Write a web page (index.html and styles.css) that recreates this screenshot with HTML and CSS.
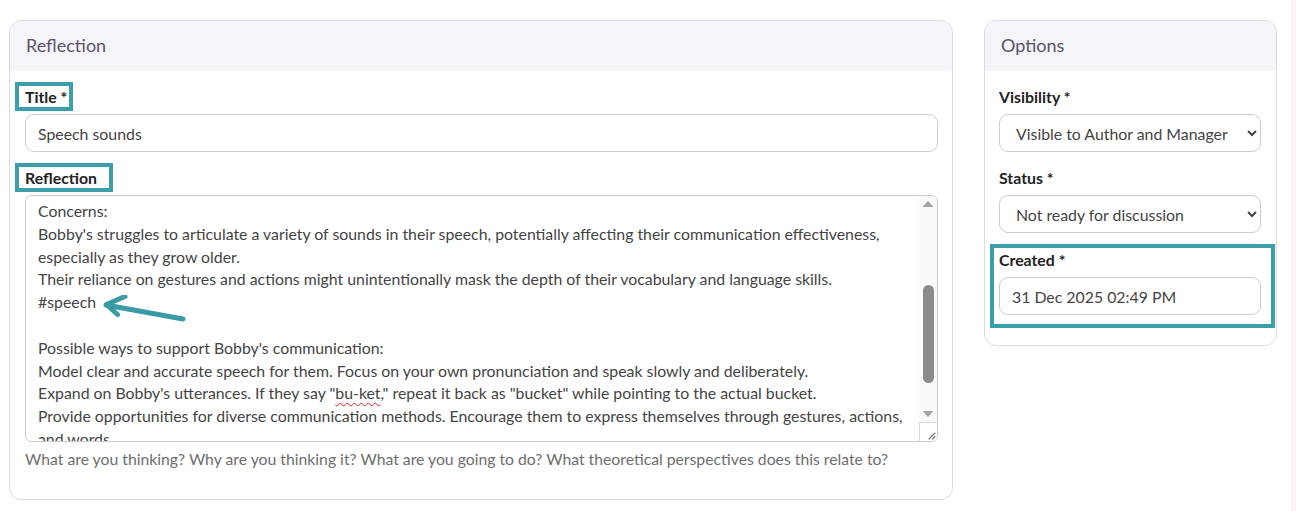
FILE: index.html
```html
<!DOCTYPE html>
<html lang="en">
<head>
<meta charset="utf-8">
<title>Reflection</title>
<link rel="stylesheet" href="styles.css">
</head>
<body>
<div class="page">
  <main class="layout">
    <section class="card card-main">
      <header class="card-header">Reflection</header>
      <div class="card-body">
        <div class="field">
          <label class="label"><span class="mark mark-title">Title <span class="req">*</span></span></label>
          <div class="input">Speech sounds</div>
        </div>
        <div class="field">
          <label class="label"><span class="mark mark-refl">Reflection</span></label>
          <div class="textarea">
            <div class="ta-content">
              <div>Concerns:</div>
              <div>Bobby's struggles to articulate a variety of sounds in their speech, potentially affecting their communication effectiveness,</div>
              <div>especially as they grow older.</div>
              <div>Their reliance on gestures and actions might unintentionally mask the depth of their vocabulary and language skills.</div>
              <div>#speech</div>
              <div>&nbsp;</div>
              <div>Possible ways to support Bobby's communication:</div>
              <div>Model clear and accurate speech for them. Focus on your own pronunciation and speak slowly and deliberately.</div>
              <div>Expand on Bobby's utterances. If they say "<span class="spell">bu-ket</span>," repeat it back as "bucket" while pointing to the actual bucket.</div>
              <div>Provide opportunities for diverse communication methods. Encourage them to express themselves through gestures, actions,</div>
              <div class="ta-last">and words.</div>
            </div>
            <div class="scrollbar">
              <div class="sb-track">
                <div class="sb-arrow">
                  <svg width="12" height="8" viewBox="0 0 12 8"><path d="M6 1 L11.5 7 L0.5 7 Z" fill="#a3a3a3"/></svg>
                </div>
                <div class="sb-space sb-space-top"></div>
                <div class="sb-thumb"></div>
                <div class="sb-space sb-space-bottom"></div>
                <div class="sb-arrow">
                  <svg width="12" height="8" viewBox="0 0 12 8"><path d="M0.5 1 L11.5 1 L6 7 Z" fill="#a3a3a3"/></svg>
                </div>
              </div>
              <div class="sb-corner">
                <svg width="10" height="10" viewBox="0 0 10 10"><path d="M9 3 L3 9 M9 6.5 L6.5 9" stroke="#777" stroke-width="1.2" stroke-linecap="round"/></svg>
              </div>
            </div>
            <svg class="arrow" width="100" height="36" viewBox="0 0 100 36">
              <path d="M3 10 L80 24" stroke="#3a9ba6" stroke-width="5" stroke-linecap="round" fill="none"/>
              <path d="M22 1.5 L3.5 9.5 L14.5 19.5" stroke="#3a9ba6" stroke-width="5" stroke-linecap="round" stroke-linejoin="round" fill="none"/>
            </svg>
          </div>
          <p class="help">What are you thinking? Why are you thinking it? What are you going to do? What theoretical perspectives does this relate to?</p>
        </div>
      </div>
    </section>

    <aside class="card card-side">
      <header class="card-header">Options</header>
      <div class="card-body card-body-side">
        <div class="field">
          <label class="label">Visibility <span class="req">*</span></label>
          <select class="select">
            <option>Visible to Author and Manager</option>
          </select>
        </div>
        <div class="field">
          <label class="label">Status <span class="req">*</span></label>
          <select class="select">
            <option>Not ready for discussion</option>
          </select>
        </div>
        <div class="field field-created">
          <label class="label">Created <span class="req">*</span></label>
          <div class="input">31 Dec 2025 02:49 PM</div>
        </div>
      </div>
    </aside>
  </main>
  <div class="edge"></div>
</div>
</body>
</html>
```

FILE: styles.css
```css
* { box-sizing: border-box; }

html, body {
  margin: 0;
  padding: 0;
  background: #ffffff;
}

body {
  font-family: Lato, "Open Sans", "Liberation Sans", sans-serif;
  font-size: 15.85px;
  color: #444444;
}

.page {
  display: flex;
  height: 511px;
}

.layout {
  flex: 1;
  display: flex;
  align-items: flex-start;
  gap: 31px;
  padding: 20px 0 0 9px;
}

.edge {
  width: 5px;
  background: #f8f4f4;
}

.card {
  border: 1px solid #dcdcdc;
  border-radius: 12px;
  background: #ffffff;
  overflow: hidden;
}

.card-main { width: 944px; }
.card-side { width: 293px; }

.card-header {
  height: 50px;
  display: flex;
  align-items: center;
  padding: 0 16px 2px 16px;
  background: #f4f4f9;
  color: #5a5368;
  font-size: 18px;
}

.card-body {
  padding: 15px 14px 29px 15px;
}

.card-body-side {
  padding: 15px 15px 21px 14px;
}

.field + .field { margin-top: 15px; }

.label {
  display: block;
  line-height: 22px;
  font-weight: 700;
  font-size: 15.85px;
  color: #222222;
  margin-bottom: 6px;
}

.req { font-weight: 700; }

.mark {
  display: inline-block;
  outline: 4px solid #3c9ea9;
  margin-left: -6px;
  padding: 1px 2px 0 6px;
  line-height: 20px;
}

.mark-refl { padding-right: 12px; }

.input {
  height: 38px;
  border: 1px solid #cccccc;
  border-radius: 9px;
  padding: 0 12px;
  display: flex;
  align-items: center;
  color: #444444;
}

.select {
  display: block;
  width: 100%;
  height: 38px;
  border: 1px solid #cccccc;
  border-radius: 9px;
  padding: 0 8px 0 12px;
  background: #ffffff;
  font-family: inherit;
  font-size: 15.85px;
  color: #444444;
}

.field-created {
  margin-top: 14px;
  margin-left: -5px;
  margin-right: -10px;
  padding: 1px 10px 9px 5px;
  outline: 4px solid #3c9ea9;
}

.textarea {
  position: relative;
  height: 247px;
  border: 1px solid #cccccc;
  border-radius: 6px;
  display: flex;
  overflow: hidden;
}

.ta-content {
  flex: 1;
  overflow: hidden;
  padding: 4px 12px 0 12px;
  line-height: 22.8px;
  white-space: nowrap;
}

.ta-last {
  line-height: 22.8px;
}

.spell {
  text-decoration: underline wavy #e02020;
  text-decoration-skip-ink: none;
  text-underline-offset: 3px;
  text-decoration-thickness: 1px;
}

.scrollbar {
  width: 18px;
  display: flex;
  flex-direction: column;
  background: #f9f9f9;
}

.sb-track {
  flex: 1;
  display: flex;
  flex-direction: column;
  align-items: center;
}

.sb-arrow {
  height: 16px;
  display: flex;
  align-items: center;
  justify-content: center;
}

.sb-space-top { height: 73px; }
.sb-space-bottom { flex: 1; }

.sb-thumb {
  width: 11px;
  height: 98px;
  border-radius: 6px;
  background: #8b8b8b;
}

.sb-corner {
  height: 19px;
  border-top: 1px solid #dddddd;
  border-left: 1px solid #dddddd;
  background: #ffffff;
  display: flex;
  align-items: flex-end;
  justify-content: flex-end;
  padding: 0 1px 1px 0;
}

.arrow {
  position: absolute;
  left: 77px;
  top: 99px;
}

.help {
  margin: 6px 0 0 0;
  line-height: 22px;
  color: #6e6e6e;
  font-size: 15.75px;
}
```
